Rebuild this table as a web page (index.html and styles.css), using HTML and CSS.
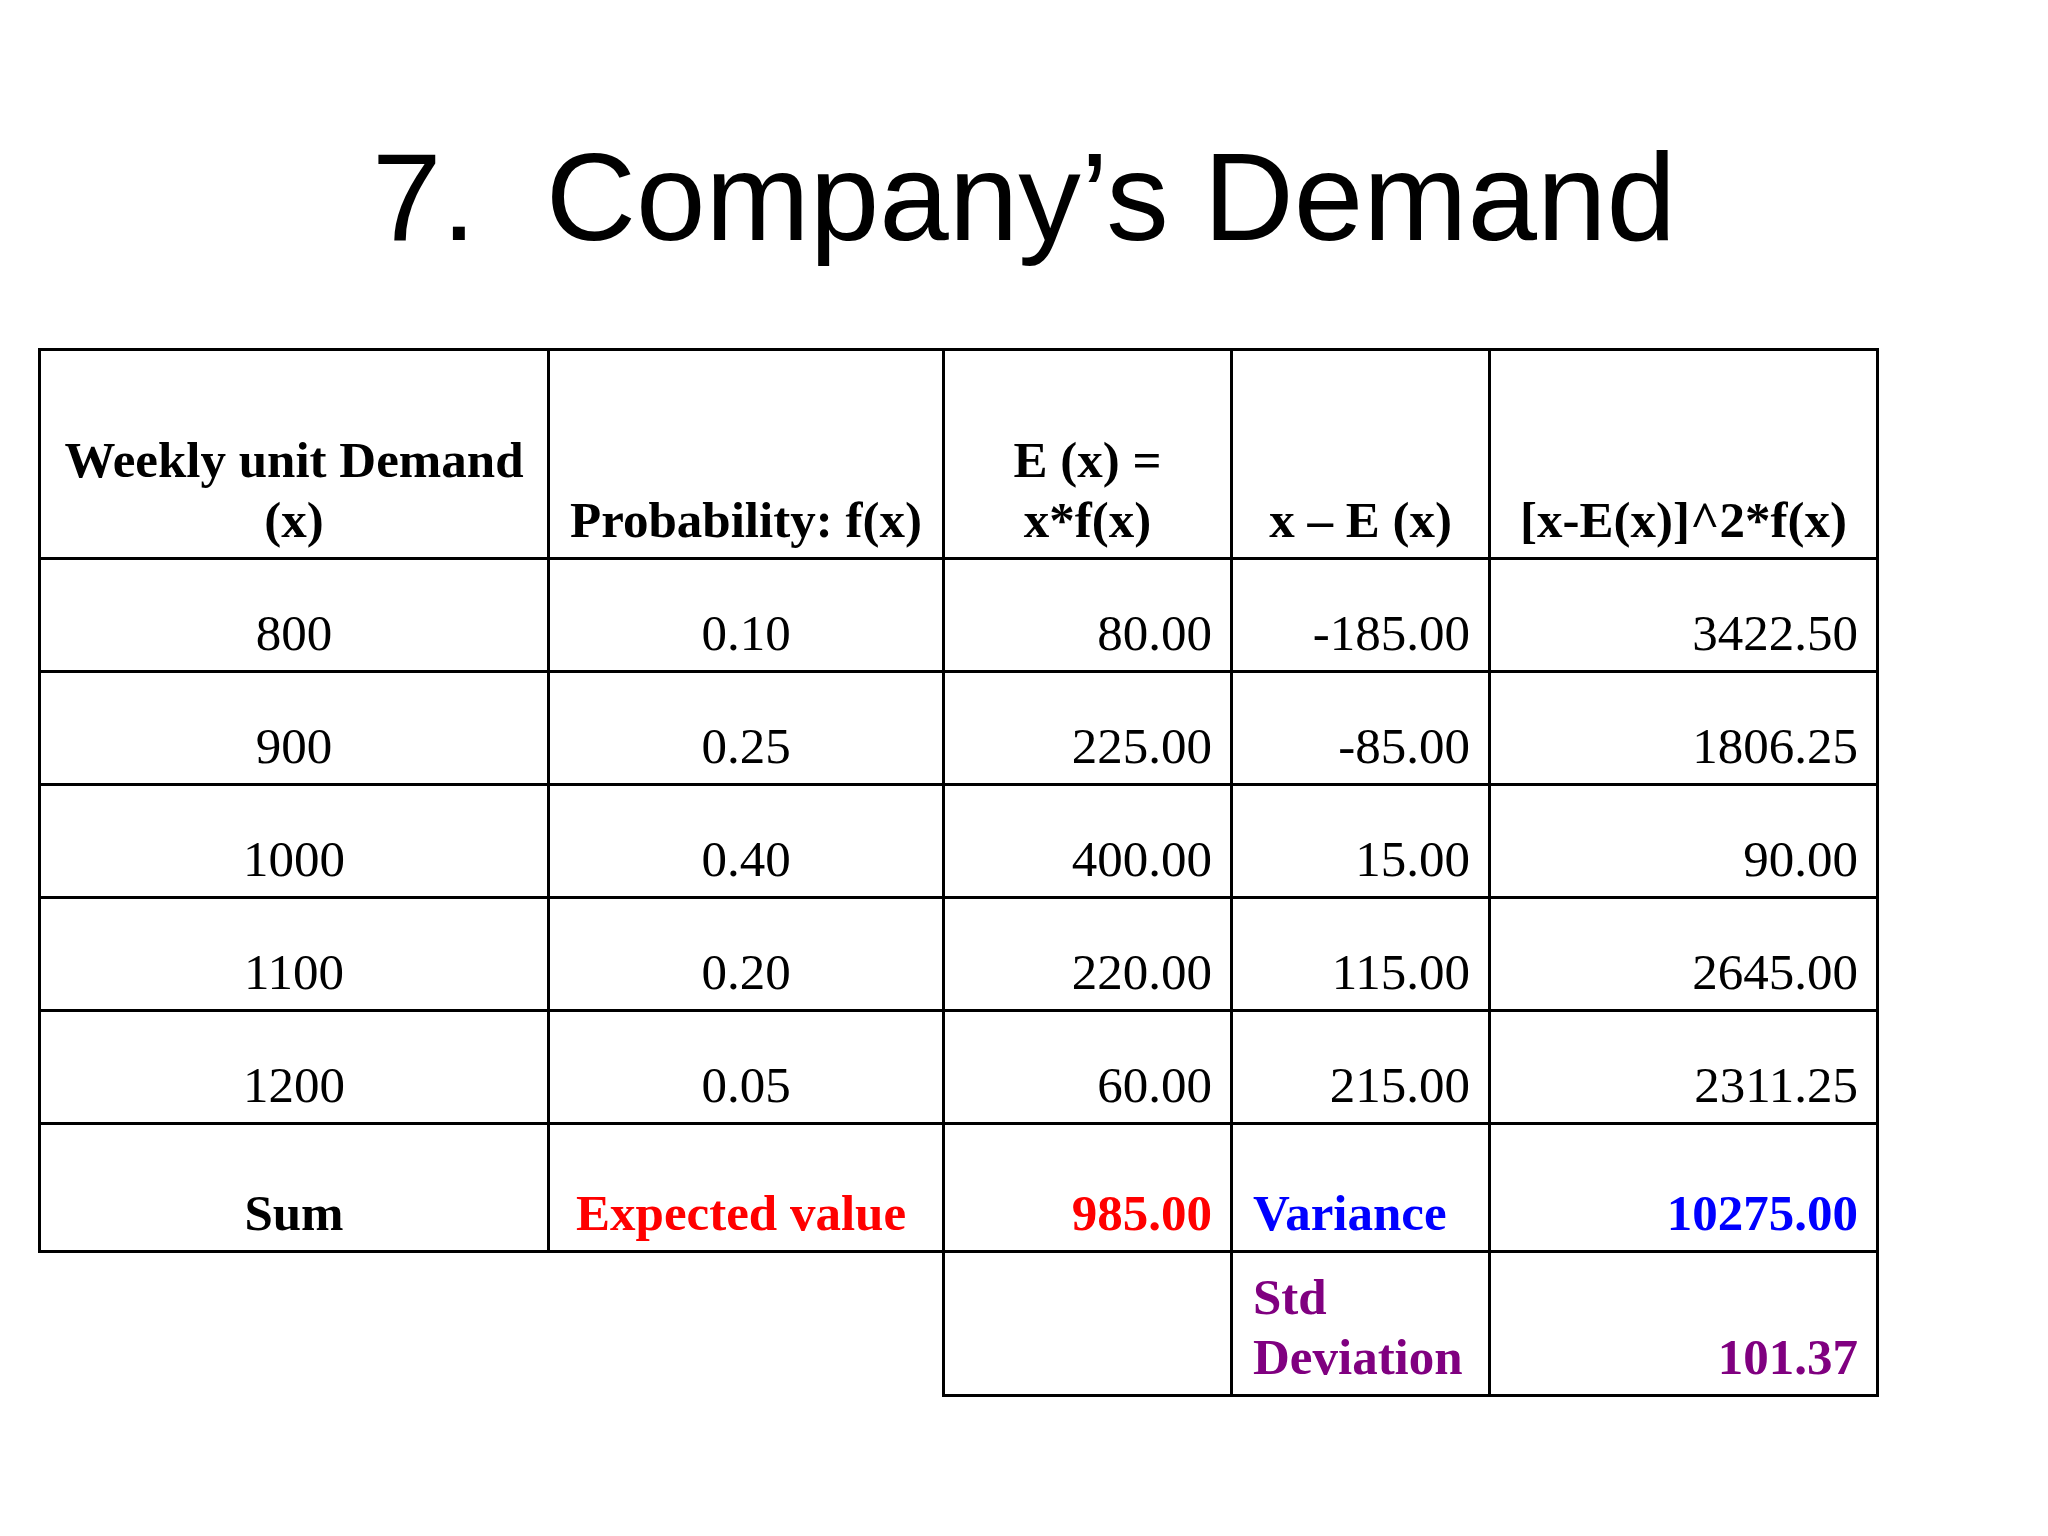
FILE: index.html
```html
<!DOCTYPE html>
<html lang="en">
<head>
<meta charset="utf-8">
<title>7. Company’s Demand</title>
<link rel="stylesheet" href="styles.css">
</head>
<body>
<div class="slide">
  <h1 class="title">7.&nbsp; Company’s Demand</h1>
  <table class="demand">
    <colgroup>
      <col class="c1"><col class="c2"><col class="c3"><col class="c4"><col class="c5">
    </colgroup>
    <tr class="head">
      <th>Weekly unit Demand<br>(x)</th>
      <th>Probability: f(x)</th>
      <th>E (x) =<br>x*f(x)</th>
      <th>x – E (x)</th>
      <th>[x-E(x)]^2*f(x)</th>
    </tr>
    <tr class="data">
      <td class="ctr">800</td><td class="ctr">0.10</td><td class="num">80.00</td><td class="num">-185.00</td><td class="num">3422.50</td>
    </tr>
    <tr class="data">
      <td class="ctr">900</td><td class="ctr">0.25</td><td class="num">225.00</td><td class="num">-85.00</td><td class="num">1806.25</td>
    </tr>
    <tr class="data">
      <td class="ctr">1000</td><td class="ctr">0.40</td><td class="num">400.00</td><td class="num">15.00</td><td class="num">90.00</td>
    </tr>
    <tr class="data">
      <td class="ctr">1100</td><td class="ctr">0.20</td><td class="num">220.00</td><td class="num">115.00</td><td class="num">2645.00</td>
    </tr>
    <tr class="data">
      <td class="ctr">1200</td><td class="ctr">0.05</td><td class="num">60.00</td><td class="num">215.00</td><td class="num">2311.25</td>
    </tr>
    <tr class="sum">
      <td class="ctr strong">Sum</td>
      <td class="lft indent strong red">Expected value</td>
      <td class="num strong red">985.00</td>
      <td class="lft strong blue">Variance</td>
      <td class="num strong blue">10275.00</td>
    </tr>
    <tr class="std">
      <td class="blank"></td>
      <td class="blank edge"></td>
      <td class="num"></td>
      <td class="lft strong purple">Std<br>Deviation</td>
      <td class="num strong purple">101.37</td>
    </tr>
  </table>
</div>
</body>
</html>
```

FILE: styles.css
```css
html, body {
  margin: 0;
  padding: 0;
  background: #ffffff;
}

.slide {
  width: 2048px;
  height: 1536px;
  padding-top: 127px;
  box-sizing: border-box;
}

.title {
  margin: 0;
  font-family: "Liberation Sans", Arial, sans-serif;
  font-weight: normal;
  font-size: 125px;
  line-height: 140px;
  color: #000000;
  text-align: center;
  white-space: nowrap;
}

.demand {
  margin: 81px 0 0 38px;
  border-collapse: separate;
  border-spacing: 0;
  table-layout: fixed;
  width: 1841px;
  font-family: "Liberation Serif", "Times New Roman", serif;
  font-size: 51px;
  line-height: 60px;
  color: #000000;
}

.c1 { width: 512px; }
.c2 { width: 395px; }
.c3 { width: 288px; }
.c4 { width: 258px; }
.c5 { width: 388px; }

.demand th,
.demand td {
  border-right: 3px solid #000;
  border-bottom: 3px solid #000;
  padding: 0 18px 7px 20px;
  vertical-align: bottom;
  white-space: nowrap;
  overflow: visible;
}

.demand tr > :first-child {
  border-left: 3px solid #000;
}

.demand tr.head > * {
  border-top: 3px solid #000;
  padding-right: 20px;
}

.demand th {
  font-weight: bold;
  text-align: center;
}

.head { height: 212px; }
.data { height: 113px; }
.sum { height: 128px; }
.std { height: 144px; }

.ctr { text-align: center; }
.num { text-align: right; }
.lft { text-align: left; }
.strong { font-weight: bold; }

.demand td.ctr { padding-right: 20px; }
.demand td.indent { padding-left: 26px; }

.red { color: #ff0000; }
.blue { color: #0000ff; }
.purple { color: #800080; }

.demand tr.std > td.blank {
  border-left: none;
  border-bottom: none;
  border-right: none;
}

.demand tr.std > td.blank.edge {
  border-right: 3px solid #000;
}
```
